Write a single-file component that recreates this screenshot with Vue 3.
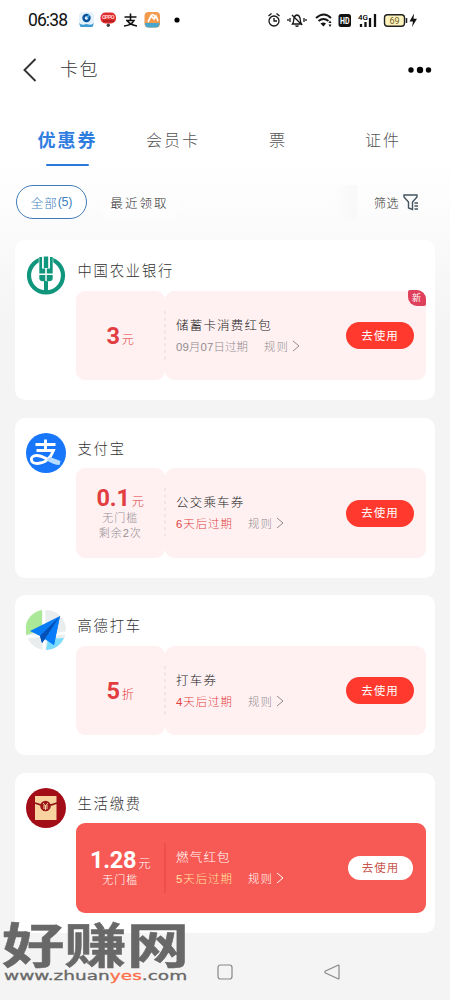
<script setup>
const tabs = ['优惠券', '会员卡', '票', '证件']
const cards = [
  { kind: 'bank', name: '中国农业银行', amount: '3', unit: '元', notes: [], title: '储蓄卡消费红包', expiry: '09月07日过期', dated: true, fresh: true },
  { kind: 'pay', name: '支付宝', amount: '0.1', unit: '元', notes: ['无门槛', '剩余2次'], title: '公交乘车券', expiry: '6天后过期' },
  { kind: 'taxi', name: '高德打车', amount: '5', unit: '折', notes: [], title: '打车券', expiry: '4天后过期' },
  { kind: 'life', name: '生活缴费', amount: '1.28', unit: '元', notes: ['无门槛'], title: '燃气红包', expiry: '5天后过期', solid: true }
]
</script>

<template>
  <main class="screen">
    <header class="status">
      <span class="clock">06:38</span>
      <svg class="apps" width="110" height="20" viewBox="0 0 110 20">
        <rect x="1" y="2" width="15" height="15" rx="4" fill="#e3f2fb" />
        <circle cx="8.500" cy="8" r="3" fill="none" stroke="#07529b" stroke-width="2.400" />
        <path d="M9 8l2-3" stroke="#4bb2e8" stroke-width="1.500" />
        <path d="M1 13q2.500 3 7.500 1q5 2 7.500-1l-1.500 4h-12z" fill="#3e9bd2" />
        <rect x="22.500" y="2.500" width="15.500" height="11" rx="5" fill="#e12c2d" />
        <text x="24" y="9" font-size="5.500" font-weight="700" fill="#ffd4cf" textLength="12.500">OPPO</text>
        <path d="M25 11h11" stroke="#8b1517" stroke-width="1" />
        <circle cx="30.300" cy="15.300" r="1.700" fill="#444" />
        <path d="M46.500 7h12M52.500 3.500v7M48 10.500h8q-2.500 5-10 5.500M49.500 11q3 4 9.500 5" fill="none" stroke="#111" stroke-width="1.600" />
        <rect x="66.500" y="2" width="15.500" height="15.500" rx="4" fill="#f39a4d" />
        <path d="M67 13h14.500q0 4.500-4 4.500h-7q-3.500 0-3.500-4.500" fill="#48a5cb" />
        <path d="M70 12l3-6 3 3 2-3 2 5M73 6q2-3 4 1" fill="none" stroke="#fff" stroke-width="1.700" />
        <circle cx="99" cy="10" r="2.600" fill="#000" />
      </svg>
      <svg class="signals" width="155" height="20" viewBox="0 0 155 20">
        <g fill="none" stroke="#171717" stroke-width="1.300">
          <circle cx="7" cy="11" r="5" /><path d="M7 8v3h3M1.500 6l3-2.500M9.500 3.500l3 2.500" />
          <path d="M25.500 14c1.500-2 1-4 1.500-6q1-3 3-3t3 3c.5 2 0 4 1.500 6zM28.500 15.500q1.500 1.500 3 0M25 5l10 10M23 8v4M37 8v4M21 9v2M39 9v2" />
          <path d="M49 8q8-7 15 0M51.500 11q5-4 10 0" stroke-width="2" />
        </g>
        <path d="M53.500 13.500q3-2 5.500 0L56.500 16.500zM61.500 13l1.500-2.500 1.500 2.500zm0 1.500L63 17l1.500-2.500z" fill="#111" />
        <rect x="71.500" y="4" width="12.500" height="13" rx="2.500" fill="#111" />
        <text x="73" y="13.700" font-size="9" font-weight="700" fill="#fff" textLength="9.500" lengthAdjust="spacingAndGlyphs">HD</text>
        <text x="91" y="9.700" font-size="8" font-weight="500" textLength="10" lengthAdjust="spacingAndGlyphs">4G</text>
        <path d="M94 14v3M98.500 12v5M103 8v9M108 4v13" stroke="#111" stroke-width="2.300" />
        <rect x="117.500" y="4.700" width="20" height="11.500" rx="3" fill="#fff3bd" stroke="#222" stroke-width="1.400" />
        <path d="M139.500 8v5" stroke="#222" stroke-width="1.500" />
        <text x="122.500" y="13.700" font-size="9" font-weight="400" fill="#6e6024" textLength="10">69</text>
        <path d="M147 3.500l-4.500 8h3.500l-1 5.500 5-8.300h-3.500z" fill="#111" />
      </svg>
    </header>

    <div class="titlebar">
      <svg width="14" height="24" viewBox="0 0 14 24"><path d="M12.500 1L1.500 12L12.500 23" fill="none" stroke="#333" stroke-width="1.900" /></svg>
      <h1>卡包</h1>
      <svg class="more" width="24" height="8" viewBox="0 0 24 8"><circle cx="3" cy="4" r="2.700" /><circle cx="12" cy="4" r="3.200" /><circle cx="20.500" cy="4" r="2.700" /></svg>
    </div>

    <nav class="tabs">
      <span v-for="(tab, i) in tabs" :key="tab" :class="{ active: i === 0 }">{{ tab }}</span>
    </nav>

    <div class="filters">
      <span class="chip selected">全部<em>(5)</em></span>
      <span class="chip recent">最近领取</span>
      <span class="shade"></span>
      <span class="filter">筛选</span>
      <svg width="16" height="17" viewBox="0 0 16 17"><path d="M1 1h13v2L9.500 8v7.500l-4-1.500V8L1 3zM11.500 9H15M11.500 12H15M11.500 15H15" fill="none" stroke="#44545e" stroke-width="1.400" /></svg>
    </div>

    <section class="cards">
      <article v-for="card in cards" :key="card.kind" class="card">
        <div class="brand">
          <svg v-if="card.kind === 'bank'" width="40" height="40" viewBox="0 0 40 40">
            <circle cx="20" cy="20.500" r="17" fill="none" stroke="#11967e" stroke-width="4.200" />
            <path d="M12.800 0h14.400v9H12.800z" fill="#fff" />
            <g fill="#11967e"><path d="M17.800 1.500h4.400v11.500h-4.400zM13.300 2h2.700v11.500h3.200v5H13.300zM26.700 2H24v11.500h-3.200v5h5.900zM13.300 20h6v6.200h-2.500q-3.500 0-3.500-3zM26.700 20h-6v6.200h2.500q3.500 0 3.500-3zM18 26h4v12h-4z" /></g>
          </svg>
          <svg v-else-if="card.kind === 'pay'" width="40" height="40" viewBox="0 0 40 40">
            <circle cx="20" cy="20" r="20" fill="#1876fb" />
            <path d="M9.500 11.500h20M19.500 6.500v11M10.500 17.500h17c-3 8-9 13-16 13-8 0-8-8-1-8 8 0 13 7 23 7" fill="none" stroke="#fff" stroke-width="2.900" />
            <path d="M24 24l10.500 4-1 4q-6 0-13-5z" fill="#b7dcff" />
          </svg>
          <svg v-else-if="card.kind === 'taxi'" width="40" height="40" viewBox="0 0 40 40">
            <circle cx="20" cy="20" r="20" fill="#e9eded" />
            <path d="M0 25A20 20 0 0 1 16 0v20z" fill="#abe897" /><path d="M20 40A20 20 0 0 0 38 28L22 29z" fill="#7bdcff" />
            <path d="M18 0v40M0 27l40-4" stroke="#fff" stroke-width="3" />
            <path d="M4 21L34 6L28 35L19 29L16 33L14 26z" fill="#087df4" /><path d="M14 26L34 6L19 29L16 33z" fill="#0550b5" /><path d="M19 29L34 6L28 35z" fill="#087bf8" />
          </svg>
          <svg v-else width="40" height="40" viewBox="0 0 40 40">
            <circle cx="20" cy="20" r="20" fill="#a20d18" /><path d="M9 8h21.500v24H9z" fill="#f8d3a0" />
            <path d="M9 15q11 5 22 0" fill="none" stroke="#8e1617" stroke-width="1.500" /><circle cx="19.500" cy="18" r="5.300" fill="#9c171b" />
            <path d="M17 15l2.500 3 2.500-3M19.500 18v4M17 18h5M17 20h5" fill="none" stroke="#f8d3a0" />
          </svg>
        </div>
        <div class="content">
          <h2>{{ card.name }}</h2>
          <div class="coupon" :class="{ solid: card.solid }">
            <div class="value">
              <div class="amount"><b>{{ card.amount }}</b><i>{{ card.unit }}</i></div>
              <div v-for="note in card.notes" :key="note" class="note">{{ note }}</div>
            </div>
            <div class="detail">
              <svg class="divider" width="2" height="50" viewBox="0 0 2 50"><path d="M1 0v50" /></svg>
              <div class="copy">
                <h3>{{ card.title }}</h3>
                <div class="terms">
                  <span class="expiry" :class="{ dated: card.dated }">{{ card.expiry }}</span>
                  <span class="rules">规则</span>
                  <svg width="8" height="12" viewBox="0 0 8 12"><path d="M1 1l6 5-6 5" fill="none" stroke="currentColor" /></svg>
                </div>
              </div>
              <button>去使用</button>
              <span v-if="card.fresh" class="fresh">新</span>
            </div>
          </div>
        </div>
      </article>
    </section>

    <footer class="navigation">
      <svg width="16" height="16" viewBox="0 0 16 16"><rect x="1" y="1" width="14" height="14" rx="2.500" /></svg>
      <svg width="16" height="16" viewBox="0 0 16 16"><path d="M14 1.200Q15 .8 15 2v12q0 1.200-1 .8L1.500 9Q0 8 1.500 7z" /></svg>
    </footer>
    <div class="watermark">
      <svg width="190" height="48" viewBox="0 0 190 48"><text class="sitename" x="2" y="42.500" textLength="187" lengthAdjust="spacingAndGlyphs">好赚网</text></svg>
      <div class="url"><span>www.zhuan<em>yes</em>.com</span></div>
    </div>
  </main>
</template>

<style>
body { margin: 0; overflow: hidden; }
</style>

<style scoped>
* { box-sizing: border-box; }
.screen { position: relative; width: 450px; height: 1000px; overflow: hidden; background: linear-gradient(#fff 0 160px, #f4f4f4 330px); font-family: "Liberation Sans", "Noto Sans CJK SC", sans-serif; font-weight: 300; color: #333; }
svg { display: block; flex: none; }
em { font-style: normal; }
h1, h2, h3 { margin: 0; font-weight: 300; }
.status { height: 40px; display: flex; align-items: center; padding: 0 20px 0 28px; }
.clock { font: 400 17.5px/20px Roboto, sans-serif; letter-spacing: -.9px; width: 50px; color: #111; white-space: nowrap; }
.apps text, .signals text { font-family: Roboto, sans-serif; }
.signals { margin-left: auto; margin-right: 8px; flex: none; }
.titlebar { height: 60px; display: flex; align-items: center; padding: 0 18px 0 23px; }
h1 { font-size: 18px; line-height: 28px; letter-spacing: 1.5px; margin-left: 23px; }
.more { margin-left: auto; fill: #050505; }
.tabs { height: 75px; display: grid; grid-template-columns: 25px 85px 126px 84px 126px 1fr; padding-top: 28px; font-size: 16px; line-height: 26px; letter-spacing: 2px; color: #555; }
.tabs span { grid-row: 1; text-align: center; }
.tabs span:nth-child(1) { grid-column: 2; }
.tabs span:nth-child(2) { grid-column: 3; }
.tabs span:nth-child(3) { grid-column: 4; }
.tabs span:nth-child(4) { grid-column: 5; }
.tabs .active { color: #2f7ddf; font-size: 18px; font-weight: 700; }
.active::after { content: ''; display: block; width: 43px; height: 2.5px; margin: 9.5px auto 0; border-radius: 2px; background: #2878dd; }
.filters { height: 54px; display: flex; align-items: center; padding: 0 31px 0 16px; font-size: 12.5px; margin-bottom: 11px; }
.chip { height: 34px; display: flex; align-items: center; justify-content: center; border-radius: 17px; flex: none; }
.selected { width: 71px; border: 1.3px solid #427cb8; background: #fff; color: #407fbd; letter-spacing: 1px; }
.selected em { letter-spacing: -.2px; }
.recent { width: 83px; margin-left: 11px; background: #fdfdfd; letter-spacing: 2.1px; }
.shade { width: 24px; height: 34px; margin-left: 152px; background: linear-gradient(90deg, transparent, #f8f8f8); }
.filter { width: 28px; margin-left: 17px; margin-right: 1px; font-size: 12px; letter-spacing: .5px; white-space: nowrap; }
.cards { display: flex; flex-direction: column; gap: 17.5px; padding: 0 15px; }
.card { display: flex; height: 160px; border-radius: 10px; background: #fff; padding: 0 9px 0 10.5px; }
.brand { width: 50px; padding-top: 15px; flex: none; }
.content { width: 350px; }
h2 { height: 50.8px; padding: 18px 0 0 2px; font-size: 14.3px; line-height: 26px; letter-spacing: 1.8px; }
.coupon { height: 89.6px; display: flex; border-radius: 9px; }
.value, .detail { height: 100%; background: #fff1f2; border-radius: 9px; }
.value { width: 89.5px; display: flex; flex-direction: column; align-items: center; justify-content: center; color: #e23d40; }
.amount { height: 26px; display: flex; align-items: baseline; gap: 2px; line-height: 26px; }
.amount b { font-family: Roboto, sans-serif; font-size: 23.5px; font-weight: 700; letter-spacing: -.2px; }
.amount i { font-size: 12.2px; font-style: normal; }
.note { font-size: 11px; line-height: 15.5px; letter-spacing: 1px; color: #969092; }
.detail { position: relative; flex: 1; display: flex; align-items: center; }
.divider { position: absolute; left: -1px; top: 20px; }
.divider path { stroke: #eae0e2; stroke-width: 1.5; stroke-dasharray: 3 3.5; }
.copy { width: 181px; padding-left: 11px; flex: none; }
h3 { font-size: 12.5px; line-height: 20px; letter-spacing: 1.2px; color: #222; white-space: nowrap; }
.terms { display: flex; align-items: center; height: 20px; color: #918b8d; font-size: 11.4px; letter-spacing: 1px; white-space: nowrap; }
.expiry { width: 72px; color: #e23e3e; }
.dated { width: 88px; letter-spacing: .15px; color: #918b8d; }
.rules { width: 28px; }
button { width: 68px; height: 27px; padding: 0; border: 0; border-radius: 14px; background: #ff392e; color: #fff; font: 400 11.5px/26px "Liberation Sans", "Noto Sans CJK SC", sans-serif; letter-spacing: 1px; }
.fresh { position: absolute; right: 0; top: -1px; width: 18px; height: 16px; border-radius: 2px 9px 2px 9px; background: #df405b; color: #fff; font-size: 9px; font-weight: 400; line-height: 16px; text-align: center; }
.solid { background: #f75a54; }
.solid .value, .solid .detail { background: transparent; color: #fff; }
.solid .note, .solid h3, .solid .terms { color: #fff; }
.solid .expiry { color: #ffe09f; }
.solid .divider path { stroke: #ed4c48; stroke-dasharray: none; }
.solid button { width: 65px; height: 24px; margin-left: 2px; background: #fff; color: #c8554d; line-height: 24px; }
.navigation { display: flex; gap: 91px; padding: 31.5px 0 0 217px; }
.navigation svg { fill: none; stroke: #888; stroke-width: 1.2; }
.watermark { position: absolute; left: 0; top: 920px; }
.watermark svg { overflow: visible; }
.sitename { font: 700 48px/48px "Noto Sans CJK SC", sans-serif; fill: #686868; stroke: #686868; stroke-width: .5; }
.url { height: 16px; margin: 0 0 0 4px; color: #686868; font: 400 12.5px/16px "DejaVu Sans", sans-serif; -webkit-text-stroke: .3px currentColor; }
.url span { display: inline-block; transform: scaleX(1.48); transform-origin: left; }
.url em { color: #ff704d; }
</style>
